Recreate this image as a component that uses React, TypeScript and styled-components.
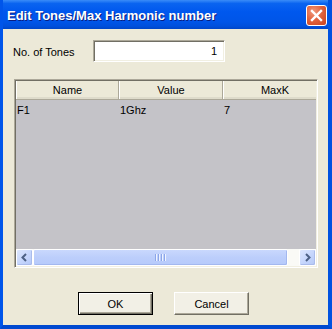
import React from "react";
import styled, { createGlobalStyle } from "styled-components";

const GlobalStyle = createGlobalStyle`
  html, body {
    margin: 0;
    padding: 0;
    background: #ece9d8;
  }
  * {
    box-sizing: border-box;
  }
`;

const Colors = {
  face: "#ece9d8",
  frame: "#0054e3",
  text: "#000000",
  gridBack: "#c4c3c8",
  shadow: "#aca899",
  darkShadow: "#716f64",
  scrollBlue: "#c3d4fc",
  arrow: "#4d6185",
};

interface Column {
  title: string;
  width: number;
}
const columns: Column[] = [
  { title: "Name", width: 103 },
  { title: "Value", width: 104 },
  { title: "MaxK", width: 104 },
];
const rows: string[][] = [["F1", "1Ghz", "7"]];

const App: React.FunctionComponent = (): JSX.Element => {
  return (
    <>
      <GlobalStyle />
      <Window>
        <TitleBar>
          <TitleText>Edit Tones/Max Harmonic number</TitleText>
          <CloseButton aria-label="Close">
            <svg width="13" height="13" viewBox="0 0 13 13">
              <path d="M2 2 L11 11 M11 2 L2 11" stroke="#ffffff" strokeWidth="2.4" strokeLinecap="square" />
            </svg>
          </CloseButton>
        </TitleBar>
        <Body>
          <FormRow>
            <Label>No. of Tones</Label>
            <NumberBox>1</NumberBox>
          </FormRow>

          <Grid>
            <HeaderRow>
              {columns.map((col) => (
                <HeaderCell key={col.title} width={col.width}>{col.title}</HeaderCell>
              ))}
            </HeaderRow>
            <RowsArea>
              {rows.map((row, i) => (
                <DataRow key={i}>
                  {row.map((value, j) => (
                    <DataCell key={j} width={columns[j].width}>{value}</DataCell>
                  ))}
                </DataRow>
              ))}
            </RowsArea>
            <ScrollBar>
              <ScrollButton>
                <svg width="9" height="9" viewBox="0 0 9 9">
                  <path d="M6 1 L2.5 4.5 L6 8" stroke={Colors.arrow} strokeWidth="2" fill="none" />
                </svg>
              </ScrollButton>
              <Track>
                <Thumb thumbWidth={255}>
                  <Grip>
                    <i /><i /><i /><i />
                  </Grip>
                </Thumb>
              </Track>
              <ScrollButton>
                <svg width="9" height="9" viewBox="0 0 9 9">
                  <path d="M3 1 L6.5 4.5 L3 8" stroke={Colors.arrow} strokeWidth="2" fill="none" />
                </svg>
              </ScrollButton>
            </ScrollBar>
          </Grid>

          <ButtonRow>
            <PushButton isDefault>OK</PushButton>
            <PushButton>Cancel</PushButton>
          </ButtonRow>
        </Body>
      </Window>
    </>
  );
};
export default App;

const Window = styled.div`
  width: 332px;
  height: 329px;
  display: flex;
  flex-direction: column;
  background: ${Colors.frame};
  border-left: 3px solid #0055ea;
  border-right: 4px solid #0052e0;
  border-bottom: 4px solid #0049d0;
  overflow: hidden;
`;

const TitleBar = styled.div`
  height: 29px;
  flex: none;
  display: flex;
  align-items: center;
  justify-content: space-between;
  margin: 0 -4px 0 -3px;
  padding: 0 5px 0 7px;
  background: linear-gradient(
    to bottom,
    #3a8cf8 0%,
    #0a64f0 12%,
    #0058ee 40%,
    #0055e8 75%,
    #0050dc 90%,
    #0046c8 100%
  );
`;

const TitleText = styled.span`
  font-family: "Liberation Sans", Arial, sans-serif;
  font-weight: bold;
  font-size: 13px;
  color: #ffffff;
  text-shadow: 1px 1px 0 #0a1e80;
  padding-top: 1px;
`;

const CloseButton = styled.div`
  width: 21px;
  height: 21px;
  margin-top: 1px;
  display: flex;
  align-items: center;
  justify-content: center;
  border: 1px solid #ffffff;
  border-radius: 3px;
  background: radial-gradient(circle at 35% 30%, #f09a7d 0%, #e2643f 45%, #c8401c 100%);
`;

const Body = styled.div`
  flex: 1;
  display: flex;
  flex-direction: column;
  background: ${Colors.face};
  font-family: "Liberation Sans", Arial, sans-serif;
  font-size: 11px;
  color: ${Colors.text};
  padding: 11px 0 0 10px;
`;

const FormRow = styled.div`
  display: flex;
  align-items: center;
  height: 22px;
`;

const Label = styled.span`
  width: 80px;
  padding-top: 1px;
`;

const NumberBox = styled.div`
  width: 132px;
  height: 22px;
  display: flex;
  align-items: center;
  justify-content: flex-end;
  padding-right: 7px;
  background: #ffffff;
  border-top: 1px solid ${Colors.shadow};
  border-left: 1px solid ${Colors.shadow};
  border-right: 1px solid #ffffff;
  border-bottom: 1px solid #ffffff;
  box-shadow: inset 1px 1px 0 ${Colors.darkShadow}, inset -1px -1px 0 #f1efe2;
`;

const Grid = styled.div`
  margin-top: 17px;
  margin-left: 1px;
  width: 304px;
  height: 189px;
  display: flex;
  flex-direction: column;
  border-top: 1px solid ${Colors.shadow};
  border-left: 1px solid ${Colors.shadow};
  border-right: 1px solid #ffffff;
  border-bottom: 1px solid #ffffff;
  box-shadow: inset 1px 1px 0 ${Colors.darkShadow}, inset -1px -1px 0 #f1efe2;
  padding: 1px;
  background: ${Colors.gridBack};
  overflow: hidden;
`;

const HeaderRow = styled.div`
  display: flex;
  height: 19px;
  flex: none;
  overflow: hidden;
  background: ${Colors.face};
  border-bottom: 1px solid #aca899;
`;

const HeaderCell = styled.div<{ width: number }>`
  flex: none;
  width: ${(p) => p.width}px;
  display: flex;
  align-items: center;
  justify-content: center;
  border-left: 1px solid #ffffff;
  border-right: 1px solid #aca899;
  box-shadow: inset 0 -2px 0 #dedbcb;
`;

const RowsArea = styled.div`
  flex: 1;
  overflow: hidden;
`;

const DataRow = styled.div`
  display: flex;
  height: 19px;
  align-items: center;
`;

const DataCell = styled.div<{ width: number }>`
  flex: none;
  width: ${(p) => p.width}px;
  padding-left: 1px;
  padding-top: 1px;
`;

const ScrollBar = styled.div`
  display: flex;
  height: 17px;
  flex: none;
  background: #fdfdfa;
`;

const ScrollButton = styled.div`
  width: 17px;
  height: 17px;
  flex: none;
  display: flex;
  align-items: center;
  justify-content: center;
  background: linear-gradient(to bottom right, #dce6fd, ${Colors.scrollBlue} 60%, #b4c8f6);
  border: 1px solid #ffffff;
  border-radius: 2px;
  box-shadow: inset -1px -1px 0 #aabcec;
`;

const Track = styled.div`
  flex: 1;
  display: flex;
  background: #fafaf6;
`;

const Thumb = styled.div<{ thumbWidth: number }>`
  width: ${(p) => p.thumbWidth}px;
  height: 17px;
  display: flex;
  align-items: center;
  justify-content: center;
  background: linear-gradient(to bottom, #c9d8fd, #bccefb 50%, #b6cafb);
  border: 1px solid #ffffff;
  border-radius: 2px;
  box-shadow: inset -1px -1px 0 #a3b8ef;
`;

const Grip = styled.div`
  display: flex;
  gap: 1px;
  i {
    display: block;
    width: 1px;
    height: 7px;
    background: #8ca6e8;
    box-shadow: 1px 0 0 #eef3ff;
    margin-right: 1px;
  }
`;

const ButtonRow = styled.div`
  display: flex;
  gap: 21px;
  margin-top: 24px;
  padding-left: 65px;
`;

const PushButton = styled.div<{ isDefault?: boolean }>`
  width: 75px;
  height: 23px;
  display: flex;
  align-items: center;
  justify-content: center;
  background: #f2f0e6;
  border: 1px solid ${(p) => (p.isDefault ? "#000000" : "#ffffff")};
  border-right-color: ${(p) => (p.isDefault ? "#000000" : "#716f64")};
  border-bottom-color: ${(p) => (p.isDefault ? "#000000" : "#716f64")};
  box-shadow: ${(p) =>
    p.isDefault
      ? "inset 1px 1px 0 #ffffff, inset -1px -1px 0 #716f64, inset -2px -2px 0 #aca899"
      : "inset -1px -1px 0 #aca899"};
  padding-top: 1px;
`;
